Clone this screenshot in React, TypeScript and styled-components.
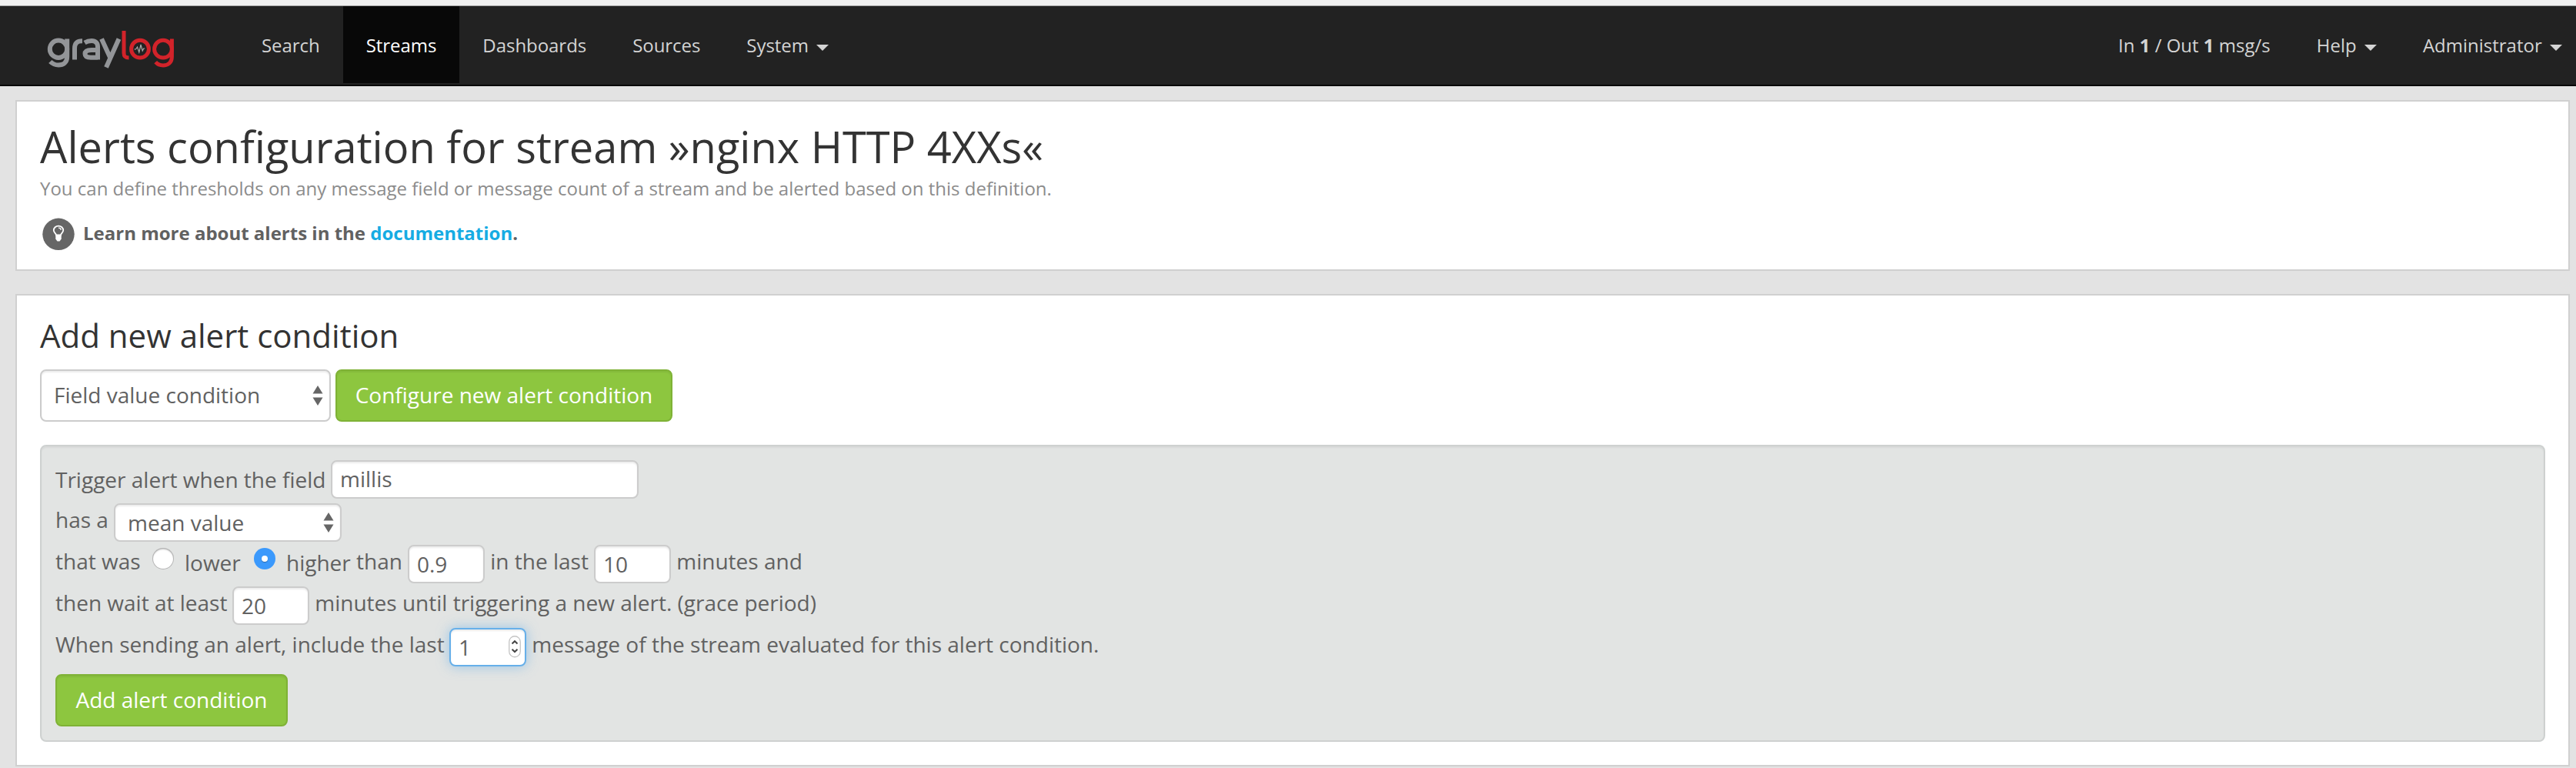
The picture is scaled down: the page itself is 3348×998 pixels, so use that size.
import React from "react";
import styled, { createGlobalStyle } from "styled-components";

const Global = createGlobalStyle`
  * { box-sizing: border-box; }
  body { margin: 0; background: #e3e3e3; font-family: "Open Sans", sans-serif; color: #616161; overflow: hidden; }
  h1, h2, p { margin: 0; font-weight: 400; }
  input, button { font-family: inherit; }
`;

const Page = styled.div`
  height: 998px;
  border-top: 7px solid #f0f0f0;
  overflow: hidden;
`;

const Navbar = styled.nav`
  display: flex;
  align-items: flex-start;
  height: 105px;
  border-top: 1px solid #a5a5a5;
  border-bottom: 2px solid #080808;
  background: #222;
  padding-right: 18px;
`;

const Brand = styled.a`
  width: 310px;
  height: 100px;
  padding: 27px 0 0 58px;
`;

const NavItem = styled.a<{ $active?: boolean; $last?: boolean; $tight?: boolean }>`
  height: 100px;
  padding: 32px ${(p) => (p.$last ? 0 : 30)}px 0 30px;
  font-size: 24px;
  line-height: 38px;
  letter-spacing: ${(p) => (p.$tight ? "-0.05px" : "normal")};
  white-space: pre;
  color: ${(p) => (p.$active ? "#fff" : "#d4d4d4")};
  background: ${(p) => (p.$active ? "#080808" : "transparent")};
`;

const Spacer = styled.div`
  flex: 1;
`;

const Caret = styled.span`
  display: inline-block;
  margin-left: 4px;
  vertical-align: middle;
  border-top: 8px solid currentColor;
  border-left: 8px solid transparent;
  border-right: 8px solid transparent;
`;

const Panel = styled.section<{ $height: number; $top: number }>`
  margin: ${(p) => p.$top}px 8px 0 20px;
  height: ${(p) => p.$height}px;
  padding: 0 30px;
  border: 2px solid #d0d0d0;
  background: #fff;
`;

const Title = styled.h1`
  padding-top: 20px;
  font-size: 56px;
  line-height: 76px;
  color: #333;
`;

const Subtitle = styled.p`
  font-size: 24px;
  line-height: 34px;
  color: #8c8c8c;
`;

const Hint = styled.div`
  display: flex;
  align-items: center;
  height: 42px;
  margin-top: 21px;
  padding-left: 3px;
  gap: 11px;
  font-size: 24px;
  font-weight: 700;
`;

const HintText = styled.span`
  line-height: 34px;
  padding-bottom: 2px;
`;

const Link = styled.a`
  color: #16ace3;
`;

const Heading = styled.h2`
  padding-top: 23px;
  font-size: 42px;
  line-height: 58px;
  color: #333;
`;

const Toolbar = styled.div`
  display: flex;
  gap: 6px;
  margin-top: 15px;
`;

const SelectBox = styled.div<{ $width: number; $height: number }>`
  display: flex;
  align-items: center;
  justify-content: space-between;
  width: ${(p) => p.$width}px;
  height: ${(p) => p.$height}px;
  padding: 0 8px 0 16px;
  border: 2px solid #ccc;
  border-radius: 8px;
  background: #fff;
  box-shadow: inset 0 2px 2px rgba(0, 0, 0, 0.075);
  font-size: 28px;
  line-height: 38px;
`;

const SelectText = styled.span<{ $lift: number }>`
  padding-bottom: ${(p) => p.$lift}px;
`;

const Button = styled.button<{ $width: number }>`
  width: ${(p) => p.$width}px;
  height: 68px;
  padding: 0 0 2px;
  border: 2px solid #7fb236;
  border-radius: 8px;
  background: #8dc63f;
  box-shadow: inset 0 2px 2px rgba(0, 0, 0, 0.06);
  color: #fff;
  font-size: 28px;
  line-height: 38px;
  white-space: nowrap;
`;

const Well = styled.form`
  height: 386px;
  margin-top: 30px;
  padding: 18px;
  border: 2px solid #ced1d0;
  border-radius: 8px;
  background: #e2e4e3;
  box-shadow: inset 0 2px 2px rgba(0, 0, 0, 0.05);
`;

const Row = styled.div<{ $height?: number }>`
  display: flex;
  align-items: flex-start;
  height: ${(p) => p.$height ?? 54}px;
  font-size: 28px;
  line-height: 38px;
  white-space: pre;
`;

const Label = styled.span<{ $top?: number; $width?: number }>`
  margin-top: ${(p) => p.$top ?? 2}px;
  ${(p) => (p.$width ? `width: ${p.$width}px;` : "")}
`;

const Field = styled.div<{ $width: number; $focus?: boolean; $top?: number }>`
  display: flex;
  justify-content: space-between;
  align-items: flex-start;
  width: ${(p) => p.$width}px;
  height: 50px;
  padding: ${(p) => p.$top ?? 4}px 5px 0 10px;
  border: 2px solid ${(p) => (p.$focus ? "#66afe9" : "#ccc")};
  border-radius: 8px;
  background: #fff;
  box-shadow: inset 0 2px 2px rgba(0, 0, 0, 0.075)${(p) => (p.$focus ? ", 0 0 16px rgba(102, 175, 233, 0.6)" : "")};
`;

const Radio = styled.span<{ $checked?: boolean }>`
  display: flex;
  align-items: center;
  justify-content: center;
  width: 28px;
  height: 28px;
  margin: 4px 14px 0 0;
  border-radius: 50%;
  background: ${(p) => (p.$checked ? "#3b99fc" : "#fff")};
  box-shadow: ${(p) => (p.$checked ? "none" : "inset 0 0 0 1px #b4b4b4, inset 0 2px 2px rgba(0,0,0,0.2)")};
  &::after {
    content: "";
    width: 8px;
    height: 8px;
    border-radius: 50%;
    background: #fff;
    box-shadow: ${(p) => (p.$checked ? "0 1px 1px rgba(0,0,0,0.3)" : "none")};
  }
`;

const Actions = styled.div`
  padding-top: 6px;
`;

const StepperIcon = styled.svg`
  margin-top: 4px;
`;

const Logo = () => (
  <svg width="174" height="56" viewBox="58 35 174 56" fill="none">
    <g stroke="#939598" strokeWidth="6">
      <circle cx="76" cy="63.700" r="11.200" />
      <path d="M87.200 50.500v23c0 8-5 11-11.200 11c-5 0-8-1.800-10.700-4.500" />
      <path d="M97 77.500V63c0-7 3-9.800 10-9.800" />
      <path d="M110 55.500c3-1.800 6-2.500 9-2.500c5.500 0 8 3 8 7.500V77.500M127 65h-8c-5.500 0-8.500 1.500-8.500 5s3 4.700 7.500 4.700H127" />
      <path d="M132 50.500l11 24M154.500 50.500l-16.500 37" />
    </g>
    <g stroke="#d2232a" strokeWidth="5">
      <path d="M161 40v29c0 4.500 2 6 6.500 6" />
      <circle cx="182" cy="63.700" r="11.400" />
      <circle cx="212" cy="63.700" r="11.400" />
      <path d="M223.400 50.500v23c0 8-5 11.500-11.400 11.500c-4.500 0-7.500-1.600-9.800-4.300" />
    </g>
    <path d="M174.500 64h2l2-3 2.300 7 2.200-10 2.200 8 1.500-3h1.500" stroke="#aaa" strokeWidth="1.200" />
  </svg>
);

const Bulb = () => (
  <svg width="42" height="42" viewBox="0 0 42 42">
    <circle cx="21" cy="21.300" r="20.700" fill="#666" />
    <path d="M18 22.500c0-2-3.200-3-3.200-6.300a6.200 5.600 0 0 1 12.400 0c0 3.300-3.200 4.300-3.200 6.300z" fill="none" stroke="#fff" strokeWidth="1.800" />
    <path d="M17.300 22.500h7.400v5l-2.200 3h-3l-2.200-3z" fill="#fff" />
    <path d="M21 13.200c2 0 3.200 1 3.200 2.800" fill="none" stroke="#fff" strokeWidth="1.200" />
  </svg>
);

const Arrows = () => (
  <svg width="14" height="26" viewBox="0 0 14 26" fill="#666">
    <path d="M7 0l6.500 10.500H.5zM7 26l6.500-10.500H.5z" />
  </svg>
);

const Stepper = () => (
  <StepperIcon width="16" height="30" viewBox="0 0 16 30" fill="none">
    <rect x=".75" y=".75" width="14.500" height="27" rx="7.200" fill="#fff" stroke="#c4c4c4" strokeWidth="1.300" />
    <path d="M4.500 10.500L8 7.200l3.500 3.300M4.500 17.800L8 21.100l3.500-3.300" stroke="#444" strokeWidth="2" />
  </StepperIcon>
);

export default function App() {
  return (
    <>
      <Global />
      <Page>
        <Navbar>
          <Brand><Logo /></Brand>
          <NavItem $tight>Search</NavItem>
          <NavItem $tight $active>Streams</NavItem>
          <NavItem $tight>Dashboards</NavItem>
          <NavItem $tight>Sources</NavItem>
          <NavItem $tight>System <Caret /></NavItem>
          <Spacer />
          <NavItem>In <b>1</b> / Out <b>1</b> msg/s</NavItem>
          <NavItem>Help <Caret /></NavItem>
          <NavItem $last>Administrator <Caret /></NavItem>
        </Navbar>
        <Panel $top={18} $height={222}>
          <Title>Alerts configuration for stream »nginx HTTP 4XXs«</Title>
          <Subtitle>
            You can define thresholds on any message field or message count of a stream and be alerted based on this definition.
          </Subtitle>
          <Hint>
            <Bulb />
            <HintText>Learn more about alerts in the <Link>documentation</Link>.</HintText>
          </Hint>
        </Panel>
        <Panel $top={30} $height={614}>
          <Heading>Add new alert condition</Heading>
          <Toolbar>
            <SelectBox $width={378} $height={68}>
              <SelectText $lift={2}>Field value condition</SelectText>
              <Arrows />
            </SelectBox>
            <Button $width={438}>Configure new alert condition</Button>
          </Toolbar>
          <Well>
            <Row $height={56}>
              <Label $top={6} $width={358}>Trigger alert when the field</Label>
              <Field $width={400} $top={3}>millis</Field>
            </Row>
            <Row>
              <Label $width={76}>has a</Label>
              <SelectBox $width={296} $height={50}>
                <SelectText $lift={0}>mean value</SelectText>
                <Arrows />
              </SelectBox>
            </Row>
            <Row>
              <Label $width={126}>that was</Label>
              <Radio />
              <Label $top={4} $width={90}>lower</Label>
              <Radio $checked />
              <Label $top={4} $width={91}>higher</Label>
              <Label $width={67}>than</Label>
              <Field $width={100}>0.9</Field>
              <Label $width={142}> in the last</Label>
              <Field $width={100}>10</Field>
              <Label> minutes and</Label>
            </Row>
            <Row>
              <Label $width={230}>then wait at least</Label>
              <Field $width={100}>20</Field>
              <Label> minutes until triggering a new alert. (grace period)</Label>
            </Row>
            <Row>
              <Label $width={512}>When sending an alert, include the last</Label>
              <Field $width={100} $focus>1<Stepper /></Field>
              <Label> message of the stream evaluated for this alert condition.</Label>
            </Row>
            <Actions><Button type="button" $width={302}>Add alert condition</Button></Actions>
          </Well>
        </Panel>
      </Page>
    </>
  );
}
